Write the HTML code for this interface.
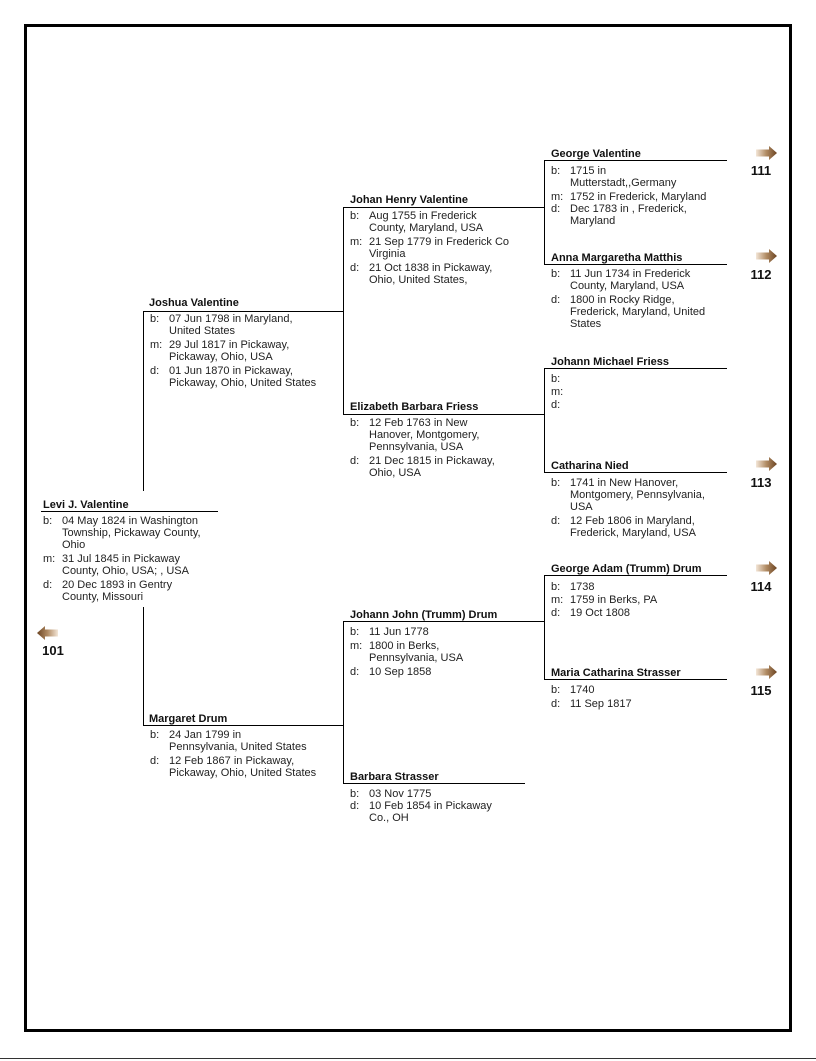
<!DOCTYPE html>
<html><head><meta charset="utf-8"><style>
body{margin:0;width:816px;height:1061px;background:#fff;position:relative;font-family:"Liberation Sans",Arial,sans-serif;color:#222;overflow:hidden}
.frame{position:absolute;left:24px;top:24px;width:762px;height:1002px;border:3px solid #000}
.bl{position:absolute;left:0;top:1058px;width:816px;height:1px;background:#333}
.h{position:absolute;height:1px;background:#000}
.v{position:absolute;width:1px;background:#000}
.n{position:absolute;font-weight:bold;font-size:11px;line-height:12px;white-space:nowrap;color:#111;transform:translateY(1px)}
.d{position:absolute;font-size:11px;line-height:12px;color:#222;transform:translateY(1px)}
.d div{position:relative;padding-left:19px;margin-bottom:2px;white-space:nowrap}
.d div span{position:absolute;left:0;top:0}
.num{position:absolute;font-weight:bold;font-size:13px;width:30px;text-align:center;color:#111}
.ar{position:absolute}
</style></head><body>
<div class="frame"></div>
<div class="bl"></div>
<svg width="0" height="0" style="position:absolute"><defs><linearGradient id="g" x1="0" x2="1"><stop offset="0" stop-color="#f3e6d8"/><stop offset="0.5" stop-color="#b08a62"/><stop offset="1" stop-color="#6b4422"/></linearGradient><linearGradient id="g2" x1="1" x2="0"><stop offset="0" stop-color="#f3e6d8"/><stop offset="0.5" stop-color="#b08a62"/><stop offset="1" stop-color="#6b4422"/></linearGradient></defs></svg>

<div class="h" style="left:41px;top:511px;width:177px"></div>
<div class="v" style="left:143px;top:311px;height:180px"></div>
<div class="v" style="left:143px;top:607px;height:118px"></div>
<div class="h" style="left:143px;top:311px;width:200px"></div>
<div class="h" style="left:143px;top:725px;width:200px"></div>
<div class="v" style="left:343px;top:207px;height:207px"></div>
<div class="v" style="left:343px;top:621px;height:162px"></div>
<div class="h" style="left:343px;top:207px;width:201px"></div>
<div class="h" style="left:343px;top:414px;width:201px"></div>
<div class="h" style="left:343px;top:621px;width:201px"></div>
<div class="h" style="left:343px;top:783px;width:182px"></div>
<div class="v" style="left:544px;top:160px;height:104px"></div>
<div class="v" style="left:544px;top:368px;height:104px"></div>
<div class="v" style="left:544px;top:575px;height:104px"></div>
<div class="h" style="left:544px;top:160px;width:183px"></div>
<div class="h" style="left:544px;top:264px;width:183px"></div>
<div class="h" style="left:544px;top:368px;width:183px"></div>
<div class="h" style="left:544px;top:472px;width:183px"></div>
<div class="h" style="left:544px;top:575px;width:183px"></div>
<div class="h" style="left:544px;top:679px;width:183px"></div>

<div class="n" style="left:43px;top:498px">Levi J. Valentine</div>
<div class="d" style="left:43px;top:514px">
<div><span>b:</span>04 May 1824 in Washington<br>Township, Pickaway County,<br>Ohio</div>
<div><span>m:</span>31 Jul 1845 in Pickaway<br>County, Ohio, USA; , USA</div>
<div><span>d:</span>20 Dec 1893 in Gentry<br>County, Missouri</div></div>

<div class="n" style="left:149px;top:296px">Joshua Valentine</div>
<div class="d" style="left:150px;top:312px">
<div><span>b:</span>07 Jun 1798 in Maryland,<br>United States</div>
<div><span>m:</span>29 Jul 1817 in Pickaway,<br>Pickaway, Ohio, USA</div>
<div><span>d:</span>01 Jun 1870 in Pickaway,<br>Pickaway, Ohio, United States</div></div>

<div class="n" style="left:149px;top:712px">Margaret Drum</div>
<div class="d" style="left:150px;top:728px">
<div><span>b:</span>24 Jan 1799 in<br>Pennsylvania, United States</div>
<div><span>d:</span>12 Feb 1867 in Pickaway,<br>Pickaway, Ohio, United States</div></div>

<div class="n" style="left:350px;top:193px">Johan Henry Valentine</div>
<div class="d" style="left:350px;top:209px">
<div><span>b:</span>Aug 1755 in Frederick<br>County, Maryland, USA</div>
<div><span>m:</span>21 Sep 1779 in Frederick Co<br>Virginia</div>
<div><span>d:</span>21 Oct 1838 in Pickaway,<br>Ohio, United States,</div></div>

<div class="n" style="left:350px;top:400px">Elizabeth Barbara Friess</div>
<div class="d" style="left:350px;top:416px">
<div><span>b:</span>12 Feb 1763 in New<br>Hanover, Montgomery,<br>Pennsylvania, USA</div>
<div><span>d:</span>21 Dec 1815 in Pickaway,<br>Ohio, USA</div></div>

<div class="n" style="left:350px;top:608px">Johann John (Trumm) Drum</div>
<div class="d" style="left:350px;top:625px">
<div><span>b:</span>11 Jun 1778</div>
<div><span>m:</span>1800 in Berks,<br>Pennsylvania, USA</div>
<div><span>d:</span>10 Sep 1858</div></div>

<div class="n" style="left:350px;top:770px">Barbara Strasser</div>
<div class="d" style="left:350px;top:787px">
<div style="margin-bottom:0"><span>b:</span>03 Nov 1775</div>
<div><span>d:</span>10 Feb 1854 in Pickaway<br>Co., OH</div></div>

<div class="n" style="left:551px;top:147px">George Valentine</div>
<div class="d" style="left:551px;top:164px">
<div><span>b:</span>1715 in<br>Mutterstadt,,Germany</div>
<div style="margin-bottom:0"><span>m:</span>1752 in Frederick, Maryland</div>
<div><span>d:</span>Dec 1783 in , Frederick,<br>Maryland</div></div>

<div class="n" style="left:551px;top:251px">Anna Margaretha Matthis</div>
<div class="d" style="left:551px;top:267px">
<div><span>b:</span>11 Jun 1734 in Frederick<br>County, Maryland, USA</div>
<div><span>d:</span>1800 in Rocky Ridge,<br>Frederick, Maryland, United<br>States</div></div>

<div class="n" style="left:551px;top:355px">Johann Michael Friess</div>
<div class="d" style="left:551px;top:372px">
<div style="margin-bottom:1px"><span>b:</span>&nbsp;</div>
<div style="margin-bottom:1px"><span>m:</span>&nbsp;</div>
<div><span>d:</span>&nbsp;</div></div>

<div class="n" style="left:551px;top:459px">Catharina Nied</div>
<div class="d" style="left:551px;top:476px">
<div><span>b:</span>1741 in New Hanover,<br>Montgomery, Pennsylvania,<br>USA</div>
<div><span>d:</span>12 Feb 1806 in Maryland,<br>Frederick, Maryland, USA</div></div>

<div class="n" style="left:551px;top:562px">George Adam (Trumm) Drum</div>
<div class="d" style="left:551px;top:580px">
<div style="margin-bottom:1px"><span>b:</span>1738</div>
<div style="margin-bottom:1px"><span>m:</span>1759 in Berks, PA</div>
<div><span>d:</span>19 Oct 1808</div></div>

<div class="n" style="left:551px;top:666px">Maria Catharina Strasser</div>
<div class="d" style="left:551px;top:683px">
<div><span>b:</span>1740</div>
<div><span>d:</span>11 Sep 1817</div></div>

<svg class="ar" style="left:756px;top:146px" width="22" height="14"><path d="M0 3.5 H13 V0 L21 7 L13 14 V10.5 H0 Z" fill="url(#g)"/></svg>
<div class="num" style="left:746px;top:163px">111</div>
<svg class="ar" style="left:756px;top:249px" width="22" height="14"><path d="M0 3.5 H13 V0 L21 7 L13 14 V10.5 H0 Z" fill="url(#g)"/></svg>
<div class="num" style="left:746px;top:267px">112</div>
<svg class="ar" style="left:756px;top:457px" width="22" height="14"><path d="M0 3.5 H13 V0 L21 7 L13 14 V10.5 H0 Z" fill="url(#g)"/></svg>
<div class="num" style="left:746px;top:475px">113</div>
<svg class="ar" style="left:756px;top:561px" width="22" height="14"><path d="M0 3.5 H13 V0 L21 7 L13 14 V10.5 H0 Z" fill="url(#g)"/></svg>
<div class="num" style="left:746px;top:579px">114</div>
<svg class="ar" style="left:756px;top:665px" width="22" height="14"><path d="M0 3.5 H13 V0 L21 7 L13 14 V10.5 H0 Z" fill="url(#g)"/></svg>
<div class="num" style="left:746px;top:683px">115</div>
<svg class="ar" style="left:37px;top:626px" width="22" height="14"><path d="M21 3.5 H8 V0 L0 7 L8 14 V10.5 H21 Z" fill="url(#g2)"/></svg>
<div class="num" style="left:38px;top:643px">101</div>
</body></html>
